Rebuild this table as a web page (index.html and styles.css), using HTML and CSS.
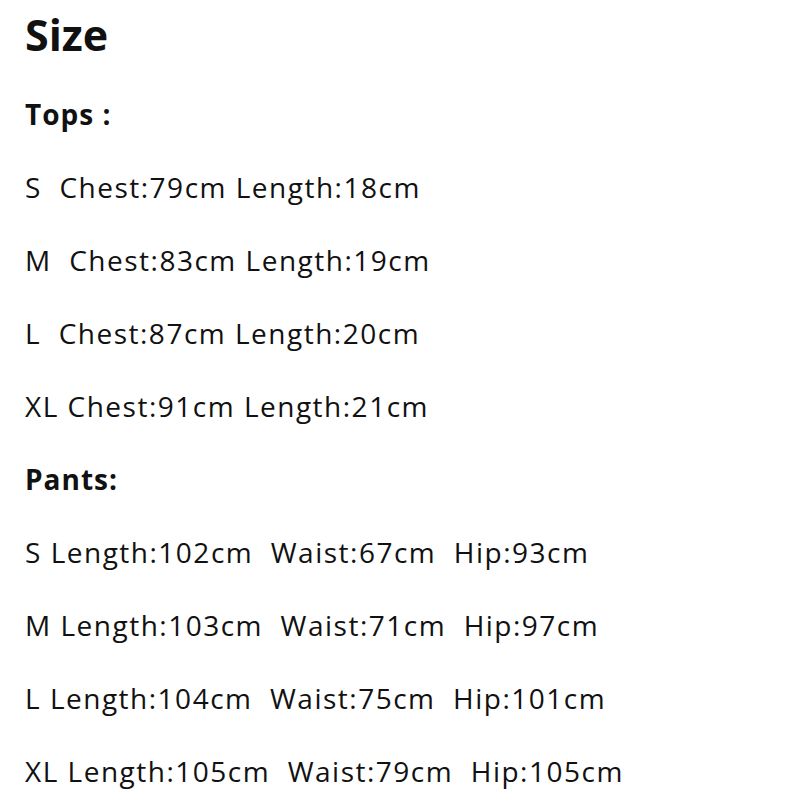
FILE: index.html
```html
<!DOCTYPE html>
<html>
<head>
<meta charset="utf-8">
<link rel="stylesheet" href="styles.css">
</head>
<body>
<div class="page">
  <h1 class="title">Size</h1>
  <p class="row head">Tops :</p>
  <p class="row">S  Chest:79cm Length:18cm</p>
  <p class="row">M  Chest:83cm Length:19cm</p>
  <p class="row">L  Chest:87cm Length:20cm</p>
  <p class="row">XL Chest:91cm Length:21cm</p>
  <p class="row head">Pants:</p>
  <p class="row">S Length:102cm  Waist:67cm  Hip:93cm</p>
  <p class="row">M Length:103cm  Waist:71cm  Hip:97cm</p>
  <p class="row">L Length:104cm  Waist:75cm  Hip:101cm</p>
  <p class="row">XL Length:105cm  Waist:79cm  Hip:105cm</p>
</div>
</body>
</html>
```
FILE: styles.css
```css
html, body {
  margin: 0;
  padding: 0;
  background: #ffffff;
}
.page {
  display: flex;
  flex-direction: column;
  padding: 0 0 0 25px;
  font-family: "Open Sans", "Noto Sans", sans-serif;
  color: #111;
}
.title {
  margin: 0;
  height: 78px;
  line-height: 70px;
  font-size: 43px;
  font-weight: 700;
}
.row {
  margin: 0;
  height: 73px;
  line-height: 73px;
  font-size: 28px;
  letter-spacing: 1.5px;
  white-space: pre;
}
.head {
  font-weight: 700;
  letter-spacing: 1px;
}
```
